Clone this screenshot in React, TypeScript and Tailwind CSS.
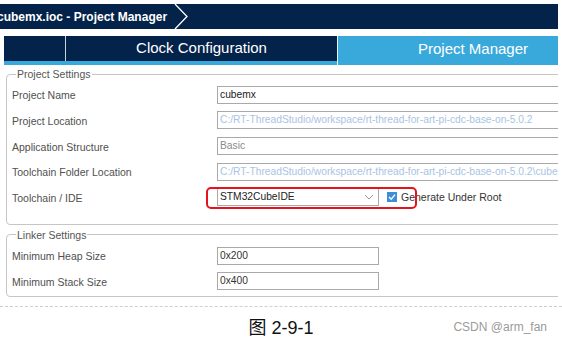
import React from 'react';

const labelCls = 'w-[205px] shrink-0 pt-[3px] text-[10.5px] text-[#505050]';
const inputCls =
  'h-[18px] border border-[#a9a9a9] bg-white px-[2px] text-[10.25px] leading-[16px] whitespace-nowrap overflow-hidden';

const FieldRow: React.FC<{ label: string; children: React.ReactNode }> = ({ label, children }) => (
  <div className="flex h-[25.6px] items-center">
    <span className={labelCls}>{label}</span>
    {children}
  </div>
);

export default function App() {
  return (
    <div
      className="relative h-[340px] w-[562px] overflow-hidden bg-white"
      style={{ fontFamily: '"Liberation Sans", Arial, sans-serif' }}
    >
      <div className="w-[558px] overflow-hidden">
        {/* breadcrumb bar */}
        <div className="mt-[4px] flex h-[25px] items-center bg-[#03234b]">
          <span className="ml-[-3px] text-[12px] font-bold text-white">
            cubemx.ioc - Project Manager
          </span>
          <svg width="16" height="25" viewBox="0 0 16 25" className="ml-[7px]">
            <polyline points="1,0 13,12.5 1,25" fill="none" stroke="#ffffff" strokeWidth="1.3" />
          </svg>
        </div>

        {/* tabs */}
        <div className="mt-[7px] flex h-[29px]">
          <div className="w-[4px] bg-white" />
          <div className="flex w-[333px] flex-col">
            <div className="flex h-[25px]">
              <div className="w-[62px] border-r border-[#c9d3df] bg-[#03234b]" />
              <div className="flex flex-1 items-center justify-center bg-[#03234b] text-[15px] text-white">
                Clock Configuration
              </div>
            </div>
            <div className="h-[4px] bg-[#39a9dc]" />
          </div>
          <div className="w-[1px] bg-[#e8f3fa]" />
          <div className="flex flex-1 items-center bg-[#39a9dc] pb-[2px] pl-[80px] text-[15px] text-white">
            Project Manager
          </div>
        </div>

        {/* Project Settings */}
        <fieldset className="ml-[6px] mt-[3px] w-[600px] rounded-[4px] border border-[#c6c6c6] pb-[14px] pl-[5px] pt-[2px]">
          <legend className="ml-[4px] px-[1px] text-[10.5px] leading-[12px] text-[#555]">Project Settings</legend>
          <FieldRow label="Project Name">
            <div className={`${inputCls} w-[360px] text-[#222]`}>cubemx</div>
          </FieldRow>
          <FieldRow label="Project Location">
            <div className={`${inputCls} w-[360px] text-[#a9c3e3]`}>
              C:/RT-ThreadStudio/workspace/rt-thread-for-art-pi-cdc-base-on-5.0.2
            </div>
          </FieldRow>
          <FieldRow label="Application Structure">
            <div className={`${inputCls} w-[360px] text-[#8a8a8a]`}>Basic</div>
          </FieldRow>
          <FieldRow label="Toolchain Folder Location">
            <div className={`${inputCls} w-[360px] text-[#a9c3e3]`}>
              C:/RT-ThreadStudio/workspace/rt-thread-for-art-pi-cdc-base-on-5.0.2\cubemx
            </div>
          </FieldRow>
          <FieldRow label="Toolchain / IDE">
            <div className={`${inputCls} flex w-[162px] items-center justify-between text-[#222]`}>
              <span>STM32CubeIDE</span>
              <svg width="10" height="6" viewBox="0 0 10 6" className="mr-[2px]">
                <polyline points="1,1 5,5 9,1" fill="none" stroke="#9a9a9a" strokeWidth="1" />
              </svg>
            </div>
            <div className="ml-[8px] flex h-[10px] w-[10px] items-center justify-center bg-[#3c8fd6]">
              <svg width="8" height="8" viewBox="0 0 8 8">
                <polyline points="1,4 3.2,6.2 7,1.6" fill="none" stroke="#ffffff" strokeWidth="1.4" />
              </svg>
            </div>
            <span className="ml-[4px] pt-[2px] text-[10.5px] text-[#333]">Generate Under Root</span>
          </FieldRow>
        </fieldset>

        {/* Linker Settings */}
        <fieldset className="ml-[6px] mt-[4px] w-[600px] rounded-[4px] border border-[#c6c6c6] pb-[2px] pl-[5px] pt-[2px]">
          <legend className="ml-[4px] px-[1px] text-[10.5px] leading-[12px] text-[#555]">Linker Settings</legend>
          <FieldRow label="Minimum Heap Size">
            <div className={`${inputCls} w-[162px] text-[#333]`}>0x200</div>
          </FieldRow>
          <FieldRow label="Minimum Stack Size">
            <div className={`${inputCls} w-[162px] text-[#333]`}>0x400</div>
          </FieldRow>
        </fieldset>
      </div>

      {/* caption */}
      <div className="mt-[9px] border-t border-dashed border-[#cfcfcf]" />
      <div className="relative flex h-[31px] justify-center pt-[11px]">
        <span
          className="text-[18px] leading-[20px] text-[#111]"
          style={{ fontFamily: '"Liberation Sans", "Noto Sans CJK SC", sans-serif' }}
        >
          图 2-9-1
        </span>
        <span className="absolute right-[15px] top-[11px] text-[12px] text-[#9a9a9a]">CSDN @arm_fan</span>
      </div>

      {/* red annotation */}
      <div className="absolute left-[206px] top-[187px] h-[22px] w-[211px] rounded-[5px] border-2 border-[#e3141b]" />
    </div>
  );
}
